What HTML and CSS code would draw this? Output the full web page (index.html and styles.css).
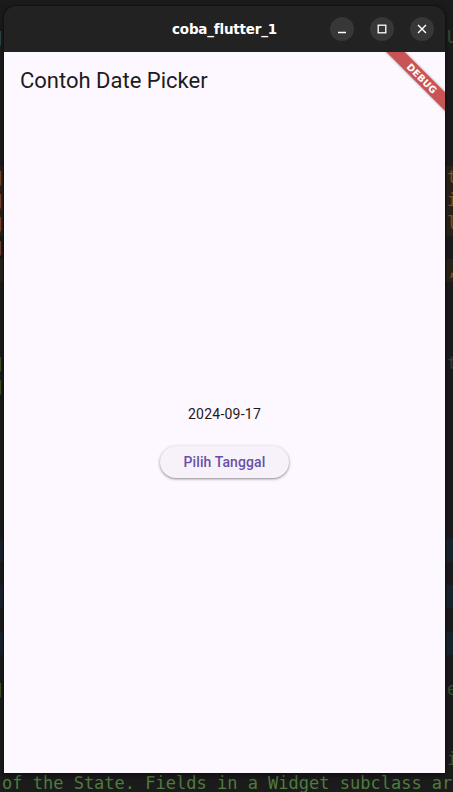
FILE: index.html
```html
<!DOCTYPE html>
<html>
<head>
<meta charset="utf-8">
<link rel="stylesheet" href="styles.css">
</head>
<body>
<div class="desktop">
  <div class="editor">
    <div class="line"><span class="l kw">|</span><span class="r gn">Ul</span></div>
    <div class="line"></div>
    <div class="line"></div>
    <div class="line"></div>
    <div class="line"></div>
    <div class="line"></div>
    <div class="line sel"><span class="l pk">|</span><span class="r or">ta</span></div>
    <div class="line sel"><span class="l pk">|</span><span class="r or">ic</span></div>
    <div class="line sel"><span class="l pk">|</span><span class="r or">l</span></div>
    <div class="line"><span class="l pk">|</span></div>
    <div class="line sel"><span class="r or">,</span></div>
    <div class="line"></div>
    <div class="line"></div>
    <div class="line"></div>
    <div class="line"><span class="l gn">|</span><span class="r gy">t</span></div>
    <div class="line"><span class="l gn">|</span></div>
    <div class="line"></div>
    <div class="line"></div>
    <div class="line"></div>
    <div class="line"></div>
    <div class="line"></div>
    <div class="line"></div>
    <div class="line blue"></div>
    <div class="line"></div>
    <div class="line blue"></div>
    <div class="line"></div>
    <div class="line blue"></div>
    <div class="line"></div>
    <div class="line"><span class="l gn">|</span><span class="r gn">ea</span></div>
    <div class="line"></div>
    <div class="line"></div>
    <div class="line"><span class="r gn">i</span></div>
    <div class="line full">of the State. Fields in a Widget subclass are</div>
  </div>

  <div class="window">
    <div class="titlebar">
      <div class="title">coba_flutter_1</div>
      <div class="controls">
        <div class="ctl">
          <svg width="10" height="10" viewBox="0 0 10 10"><path d="M1 8.5h8" stroke="#fff" stroke-width="1.3"/></svg>
        </div>
        <div class="ctl">
          <svg width="10" height="10" viewBox="0 0 10 10"><rect x="1.2" y="1.2" width="7.6" height="7.6" fill="none" stroke="#fff" stroke-width="1.3"/></svg>
        </div>
        <div class="ctl">
          <svg width="10" height="10" viewBox="0 0 10 10"><path d="M1 1L9 9M9 1L1 9" stroke="#fff" stroke-width="1.4"/></svg>
        </div>
      </div>
    </div>
    <div class="app">
      <header class="appbar">Contoh Date Picker</header>
      <main class="body">
        <div class="date">2024-09-17</div>
        <button class="btn">Pilih Tanggal</button>
      </main>
      <div class="banner">DEBUG</div>
    </div>
  </div>
</div>
</body>
</html>
```

FILE: styles.css
```css
* { box-sizing: border-box; }
html, body {
  margin: 0;
  padding: 0;
  width: 453px;
  height: 792px;
  overflow: hidden;
  background: #1b1b1b;
}
.desktop {
  position: relative;
  width: 453px;
  height: 792px;
  overflow: hidden;
}
.editor {
  padding-top: 26px;
  font-family: "DejaVu Sans Mono", monospace;
  font-size: 17px;
  width: 453px;
  overflow: hidden;
}
.line {
  height: 23.3px;
  line-height: 23.3px;
  white-space: pre;
  display: flex;
  justify-content: space-between;
  color: #3b4a55;
}
.line.full {
  display: block;
  padding-left: 2px;
  overflow: hidden;
  color: #4f7b3f;
}
.l {
  width: 4px;
  overflow: hidden;
  text-indent: -4px;
  font-size: 14px;
  opacity: 0.7;
}
.r {
  margin-left: auto;
  width: 8px;
  overflow: hidden;
  padding-left: 2px;
  opacity: 0.55;
}
.line.sel { background: #2a2219; }
.line.blue { background: #19232e; }
.kw { color: #3b6b9a; }
.pk { color: #b05a5a; }
.or { color: #c27a2c; }
.gn { color: #4f7b3f; }
.gy { color: #555555; }

.window {
  position: absolute;
  left: 4px;
  top: 6px;
  width: 441px;
  height: 767px;
  display: flex;
  flex-direction: column;
  border-radius: 12px 12px 0 0;
  overflow: hidden;
  box-shadow: 0 0 0 1px #111, 0 2px 6px rgba(0,0,0,0.5);
}
.titlebar {
  height: 46px;
  background: #222222;
  position: relative;
  display: flex;
  align-items: center;
  justify-content: center;
}
.title {
  font-family: "DejaVu Sans", sans-serif;
  font-weight: bold;
  font-size: 13.5px;
  color: #ffffff;
  letter-spacing: -0.2px;
}
.controls {
  position: absolute;
  right: 11px;
  top: 11px;
  display: flex;
  gap: 16px;
}
.ctl {
  width: 24px;
  height: 24px;
  border-radius: 50%;
  background: #373737;
  display: flex;
  align-items: center;
  justify-content: center;
}
.app {
  flex: 1;
  background: #fdf7ff;
  position: relative;
  overflow: hidden;
  display: flex;
  flex-direction: column;
}
.appbar {
  height: 56px;
  padding-left: 16px;
  display: flex;
  align-items: center;
  font-family: Roboto, sans-serif;
  font-size: 22px;
  color: #1d1b20;
}
.body {
  flex: 1;
  display: flex;
  flex-direction: column;
  align-items: center;
  justify-content: center;
}
.date {
  font-family: Roboto, sans-serif;
  font-size: 14px;
  color: #1d1b20;
  letter-spacing: 0.25px;
  line-height: 20px;
}
.btn {
  margin-top: 22px;
  height: 32px;
  padding: 0 24px;
  border: none;
  border-radius: 16px;
  background: #f7f2fa;
  box-shadow: 0 1px 2px rgba(0,0,0,0.3), 0 1px 3px 1px rgba(0,0,0,0.12);
  font-family: Roboto, sans-serif;
  font-weight: 500;
  font-size: 14px;
  color: #6750a4;
  letter-spacing: 0.1px;
}
.banner {
  position: absolute;
  left: 358px;
  top: 20px;
  width: 120px;
  height: 13px;
  transform: rotate(45deg);
  background: rgba(183, 28, 28, 0.75);
  box-shadow: 0 0 3px rgba(0,0,0,0.35);
  color: #fff;
  font-family: "DejaVu Sans", sans-serif;
  font-weight: bold;
  font-size: 9.5px;
  line-height: 13px;
  text-align: center;
  letter-spacing: 0.2px;
}
```
